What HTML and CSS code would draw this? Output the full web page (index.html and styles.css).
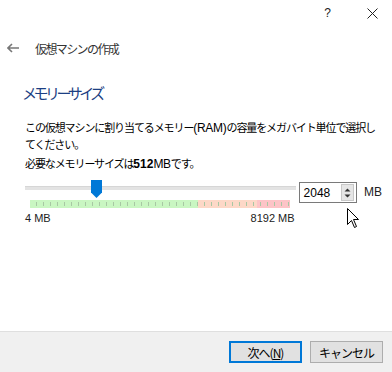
FILE: index.html
```html
<!DOCTYPE html>
<html lang="ja">
<head>
	<meta charset="UTF-8">
	<title>仮想マシンの作成</title>
	<link rel="stylesheet" href="styles.css">
</head>
<body>
	<div class="dialog">
		<div class="titlebar">
			<span class="help">?</span>
			<span class="close">
				<svg width="11" height="11" viewBox="0 0 11 11"><path d="M0.5 0.5 L10.5 10.5 M10.5 0.5 L0.5 10.5" stroke="#222" stroke-width="1" fill="none"/></svg>
			</span>
		</div>
		<div class="header">
			<svg class="back" width="12" height="10" viewBox="0 0 12 10"><path d="M5 1 L1 5 L5 9 M1 5 L12 5" stroke="#777" stroke-width="1.6" fill="none"/></svg>
			<span>仮想マシンの作成</span>
		</div>
		<div class="content">
			<h1>メモリーサイズ</h1>
			<p class="desc">この仮想マシンに割り当てるメモリー<span class="latin">(RAM)</span>の容量をメガバイト単位で選択し<br>てください。</p>
			<p class="need">必要なメモリーサイズは<b>512</b><span class="latin">MB</span>です。</p>
			<div class="mem_row">
				<div class="slider">
					<div class="track"><div class="thumb"></div></div>
					<div class="ticks"></div>
					<div class="scale">
						<span>4 MB</span>
						<span>8192 MB</span>
					</div>
				</div>
				<div class="spin">
					<span class="spin_val">2048</span>
					<span class="spin_btn">
						<svg width="7" height="12" viewBox="0 0 7 12"><path d="M0.5 4.5 L3.5 1.5 L6.5 4.5 Z M0.5 7.5 L3.5 10.5 L6.5 7.5 Z" fill="#333"/></svg>
					</span>
				</div>
				<span class="unit">MB</span>
			</div>
		</div>
		<div class="footer">
			<button class="primary">次へ(<u>N</u>)</button>
			<button>キャンセル</button>
		</div>
		<svg class="cursor" width="13" height="21" viewBox="0 0 13 21"><path d="M0.5 0.5 L0.5 16.5 L4.5 12.5 L7.5 19.5 L9.5 18.5 L6.5 11.5 L11.5 11.5 Z" fill="#fff" stroke="#000" stroke-width="1"/></svg>
	</div>
</body>
</html>
```
FILE: styles.css
```css
*{
	margin:0;
	padding:0;
	box-sizing:border-box;
}
body{
	background:#fff;
	font-family:"Noto Sans CJK JP", "Liberation Sans", sans-serif;
	font-size:12px;
	color:#000;
}
.dialog{
	position:relative;
	width:392px;
	height:372px;
	display:flex;
	flex-direction:column;
	overflow:hidden;
}
.titlebar{
	height:26px;
	display:flex;
	justify-content:flex-end;
	align-items:center;
}
.help{
	font-family:"Liberation Sans", sans-serif;
	font-size:12px;
	margin-right:36px;
	color:#222;
}
.close{
	display:flex;
	margin-right:14px;
}
.header{
	height:44px;
	display:flex;
	align-items:center;
	padding-left:7px;
	color:#333;
	font-size:12px;
	letter-spacing:-1.6px;
}
.back{
	margin-right:16px;
}
.content{
	padding:0 10px 0 25px;
}
h1{
	font-size:15px;
	font-weight:normal;
	color:#1c3f83;
	margin:11px 0 0 -3px;
	line-height:24px;
	letter-spacing:-3.5px;
}
.desc{
	margin-top:14px;
	font-size:11px;
	line-height:16px;
	letter-spacing:-1.1px;
	white-space:nowrap;
}
.latin{
	font-family:"Liberation Sans", sans-serif;
	font-size:12px;
	letter-spacing:-0.3px;
}
.need{
	margin-top:3px;
	font-size:11px;
	line-height:16px;
	letter-spacing:-1.1px;
}
.need b{
	font-family:"Liberation Sans", sans-serif;
	font-size:12px;
	letter-spacing:0;
}
.mem_row{
	display:flex;
	align-items:flex-start;
	margin-top:6px;
}
.slider{
	width:279px;
}
.track{
	position:relative;
	height:20px;
	display:flex;
	align-items:center;
}
.track::before{
	content:"";
	display:block;
	width:100%;
	height:3px;
	background:#e3e3e3;
	border-top:1px solid #d6d6d6;
}
.thumb{
	position:absolute;
	left:66px;
	top:2px;
	width:11px;
	height:18px;
	background:#0078d7;
	clip-path:polygon(0 0, 100% 0, 100% 70%, 50% 100%, 0 70%);
}
.ticks{
	margin:2px 6px 0 5px;
	height:8px;
	background:
		repeating-linear-gradient(90deg, transparent 0, transparent 6px, #a8c8a4 6px, #a8c8a4 7px) 0 2px / 100% 4px no-repeat,
		linear-gradient(90deg, #c9f6c2 0, #c9f6c2 64.5%, #fdd8c7 64.5%, #fdd8c7 87.5%, #fdc4c7 87.5%, #fdc4c7 100%);
}
.scale{
	display:flex;
	justify-content:space-between;
	font-family:"Liberation Sans", sans-serif;
	font-size:11px;
	color:#222;
	margin-top:4px;
	padding-right:1px;
}
.spin{
	margin-left:3px;
	margin-top:4px;
	width:60px;
	height:21px;
	border:1px solid #7a7a7a;
	display:flex;
	align-items:center;
	justify-content:space-between;
	padding:0 2px 0 4px;
}
.spin_val{
	font-family:"Liberation Sans", sans-serif;
	font-size:12px;
}
.spin_btn{
	width:13px;
	height:17px;
	background:#e6e6e6;
	border:1px solid #c8c8c8;
	display:flex;
	align-items:center;
	justify-content:center;
}
.unit{
	margin-left:7px;
	margin-top:7px;
	font-family:"Liberation Sans", sans-serif;
	font-size:12px;
	color:#222;
}
.footer{
	margin-top:auto;
	height:41px;
	background:#f0f0f0;
	border-top:1px solid #dfdfdf;
	display:flex;
	justify-content:flex-end;
	align-items:center;
	padding-right:9px;
	gap:8px;
}
button{
	width:73px;
	height:22px;
	background:#e1e1e1;
	border:1px solid #adadad;
	font-family:"Noto Sans CJK JP", sans-serif;
	font-size:12px;
	color:#000;
	letter-spacing:-1px;
}
button.primary{
	border:2px solid #0078d7;
}
.cursor{
	position:absolute;
	left:347px;
	top:208px;
}
```
